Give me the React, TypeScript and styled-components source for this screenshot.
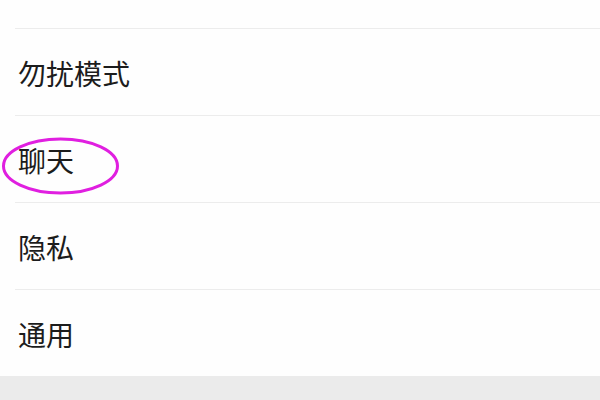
import React from 'react';
import styled, { createGlobalStyle } from 'styled-components';

const GlobalStyle = createGlobalStyle`
  html, body {
    margin: 0;
    padding: 0;
    background: #fefefe;
  }
  body {
    font-family: "Noto Sans CJK SC", "Noto Sans", sans-serif;
  }
`

const Page = styled.div`
  width: 600px;
  height: 400px;
  display: flex;
  flex-direction: column;
  background: #fefefe;
  overflow: hidden;
`

const TopStub = styled.div`
  height: 28px;
  flex-shrink: 0;
`

const Divider = styled.div`
  height: 1px;
  margin-left: 15px;
  background: #ececec;
  flex-shrink: 0;
`

const Row = styled.div`
  position: relative;
  height: 86px;
  flex-shrink: 0;
  display: flex;
  align-items: center;
  padding-left: 18px;
`

const Label = styled.span`
  font-size: 28px;
  color: #1c1c1c;
  line-height: 1;
  margin-top: 2px;
`

const Mark = styled.svg`
  position: absolute;
  left: 0;
  top: 20px;
  pointer-events: none;
`

const Footer = styled.div`
  flex: 1;
  background: #ebebeb;
`

// 设置项
const items = [
  { title: '勿扰模式', marked: false },
  { title: '聊天', marked: true },
  { title: '隐私', marked: false },
  { title: '通用', marked: false }
]

export default function App() {
  return (
    <Page>
      <GlobalStyle />
      <TopStub />
      {items.map(item => (
        <React.Fragment key={item.title}>
          <Divider />
          <Row>
            <Label>{item.title}</Label>
            {item.marked && (
              <Mark width="124" height="62" viewBox="0 0 124 62">
                <ellipse cx="60.5" cy="30" rx="57" ry="27" fill="none" stroke="#e01fe0" strokeWidth="3" />
              </Mark>
            )}
          </Row>
        </React.Fragment>
      ))}
      <Footer />
    </Page>
  )
}
